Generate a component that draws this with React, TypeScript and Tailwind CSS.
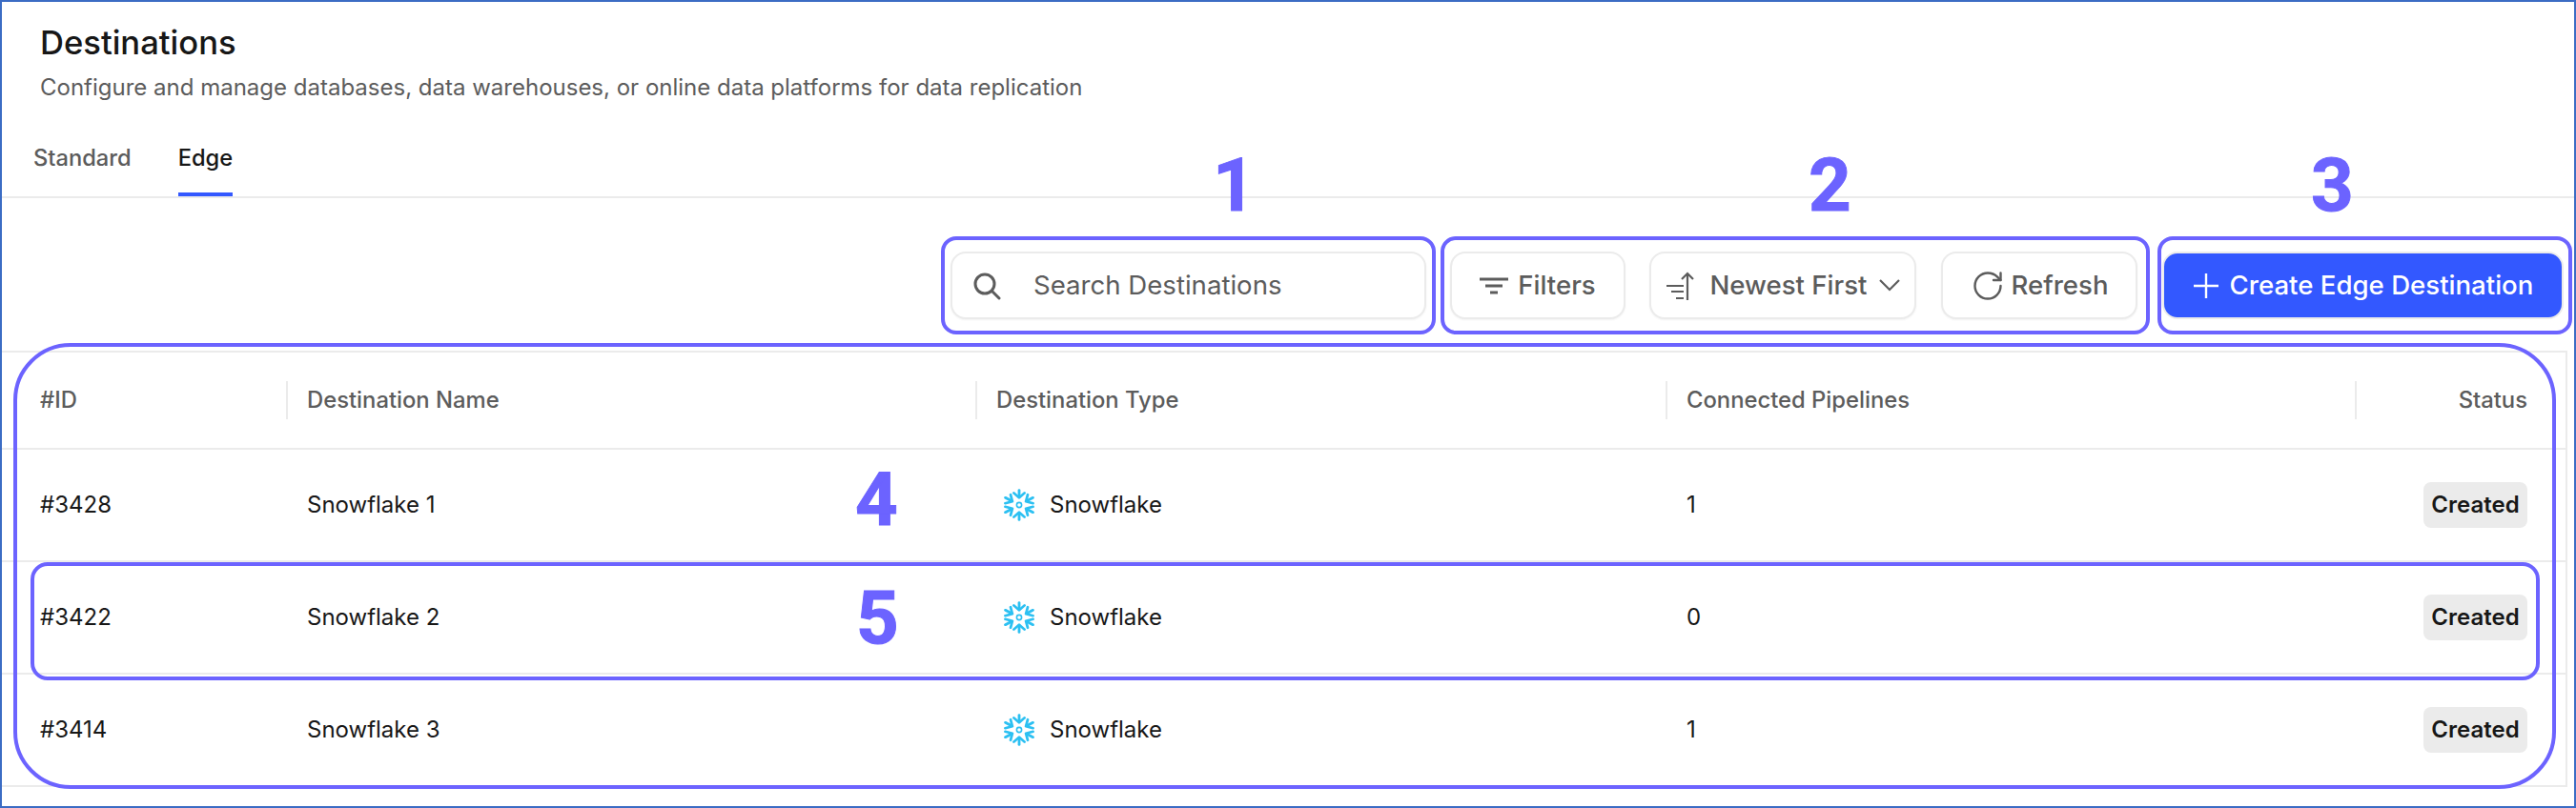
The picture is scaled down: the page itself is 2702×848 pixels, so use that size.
import { RotateCw } from "lucide-react";

function SnowflakeLogo() {
  const angles = [0, 60, 120, 180, 240, 300];
  return (
    <svg width="34" height="34" viewBox="-17 -17 34 34" className="shrink-0">
      <g transform="scale(1.08 1)">
        {angles.map((a) => (
          <g key={a} transform={`rotate(${a})`} stroke="#2cc0f2" strokeWidth="2.6" strokeLinecap="round" strokeLinejoin="round" fill="none">
            <path d="M0 -8.5V-15.5" />
            <path d="M-5.2 -12.6L0 -7.6L5.2 -12.6" />
          </g>
        ))}
      </g>
      <circle cx="0" cy="0" r="2.6" fill="none" stroke="#2cc0f2" strokeWidth="1.6" />
    </svg>
  );
}

function SearchIcon() {
  return (
    <svg width="30" height="30" viewBox="0 0 30 30" fill="none" stroke="#5c5c5c" strokeWidth="3" strokeLinecap="round" className="shrink-0">
      <circle cx="13" cy="13" r="10" />
      <path d="M21 21L28 28" />
    </svg>
  );
}

function PlusIcon() {
  return (
    <svg width="28" height="28" viewBox="0 0 28 28" fill="none" stroke="#ffffff" strokeWidth="2.4" className="shrink-0">
      <path d="M14 1V27M1 14H27" />
    </svg>
  );
}

function ChevronIcon() {
  return (
    <svg width="22" height="13" viewBox="0 0 22 13" fill="none" stroke="#5c5c5c" strokeWidth="2.2" className="shrink-0">
      <path d="M1 1L11 11L21 1" />
    </svg>
  );
}

function FilterIcon() {
  return (
    <svg width="30" height="22" viewBox="0 0 30 22" fill="none" stroke="#5c5c5c" strokeWidth="2.8" className="shrink-0">
      <path d="M0 4H30M6 11H24M11 18H19" />
    </svg>
  );
}

function SortIcon() {
  return (
    <svg width="29" height="30" viewBox="0 0 29 30" fill="none" stroke="#5c5c5c" strokeWidth="2.2" className="shrink-0">
      <path d="M22 30V2M16 8L22 2L28 8" />
      <path d="M0 15H18M5 21H18M10 28H18" />
    </svg>
  );
}

const rows = [
  { id: "#3428", name: "Snowflake 1", conn: "1" },
  { id: "#3422", name: "Snowflake 2", conn: "0" },
  { id: "#3414", name: "Snowflake 3", conn: "1" },
];

const columns = "grid grid-cols-[298px_723px_724px_723px_1fr]";
const button =
  "flex h-[71px] items-center justify-center rounded-[16px] border-2 border-[#ebebeb] bg-white text-[27.6px] font-medium text-[#5c5c5c] shadow-[0_1px_2px_rgba(0,0,0,0.05)]";
const digit =
  "pointer-events-none absolute font-['Roboto',sans-serif] text-[78px] font-bold leading-[90px] text-[#6c63ff] [-webkit-text-stroke:1px_#6c63ff]";

export default function App() {
  return (
    <div className="relative h-[848px] w-[2702px] overflow-hidden border-2 border-[#3b6cc4] bg-white font-['Inter',sans-serif]">
      <header className="pl-[40px] pt-[22px]">
        <h1 className="text-[34.6px] font-medium leading-[40px] text-[#171717]">Destinations</h1>
        <p className="mt-[12px] text-[24px] leading-[32px] text-[#5c5c5c]">
          Configure and manage databases, data warehouses, or online data platforms for data replication
        </p>
      </header>

      <nav className="mt-[42px] flex gap-[49px] border-b-2 border-[#ebebeb] pl-[33px] text-[23.7px] font-medium leading-[32px]">
        <span className="border-b-4 border-transparent pb-[20px] text-[#5c5c5c]">Standard</span>
        <span className="border-b-4 border-[#3358ff] pb-[20px] text-[#171717]">Edge</span>
      </nav>

      <div className="mt-[56px] flex justify-end gap-[25px] pr-[11px]">
        <div className="flex h-[71px] w-[499px] items-center rounded-[16px] border-2 border-[#ebebeb] bg-white pl-[21px] text-[27.6px] text-[#5c5c5c] shadow-[0_1px_2px_rgba(0,0,0,0.05)]">
          <SearchIcon />
          <span className="ml-[34px]">Search Destinations</span>
        </div>
        <div className={`${button} w-[184px] gap-[10px]`}>
          <FilterIcon />
          Filters
        </div>
        <div className={`${button} w-[280px] gap-[12px]`}>
          <span className="mr-[5px] flex">
            <SortIcon />
          </span>
          Newest First
          <ChevronIcon />
        </div>
        <div className={`${button} ml-[1px] w-[206px] gap-[7px]`}>
          <RotateCw size={36} strokeWidth={1.6} className="shrink-0" />
          Refresh
        </div>
        <div className="ml-[1px] flex h-[71px] w-[421px] items-center justify-center gap-[11px] rounded-[16px] border-2 border-[#ebebeb] bg-[#3358ff] text-[27.6px] font-medium text-white">
          <PlusIcon />
          Create Edge Destination
        </div>
      </div>

      <section className="mr-[7px] mt-[33px] border-r-2 border-t-2 border-[#ebebeb]">
        <div className={`${columns} h-[102px] items-center border-b-2 border-[#ebebeb] text-[23.8px] font-medium text-[#5c5c5c]`}>
          <div className="pl-[40px]">#ID</div>
          <div className="flex h-[40px] items-center border-l-2 border-[#ebebeb] pl-[20px]">Destination Name</div>
          <div className="flex h-[40px] items-center border-l-2 border-[#ebebeb] pl-[20px]">Destination Type</div>
          <div className="flex h-[40px] items-center border-l-2 border-[#ebebeb] pl-[20px]">Connected Pipelines</div>
          <div className="flex h-[40px] items-center justify-end border-l-2 border-[#ebebeb] pr-[40px]">Status</div>
        </div>
        {rows.map((r) => (
          <div key={r.id} className={`${columns} h-[118px] items-center border-b-2 border-[#ebebeb] text-[24px] text-[#171717]`}>
            <div className="pl-[40px]">{r.id}</div>
            <div className="pl-[22px]">{r.name}</div>
            <div className="flex items-center gap-[15px] pl-[29px]">
              <SnowflakeLogo />
              Snowflake
            </div>
            <div className="pl-[22px]">{r.conn}</div>
            <div className="flex justify-end pr-[40px]">
              <span className="flex h-[48px] w-[109px] items-center justify-center rounded-[8px] bg-[#ebebeb] font-semibold">
                Created
              </span>
            </div>
          </div>
        ))}
      </section>

      {/* annotation overlays */}
      <div className="pointer-events-none absolute left-[985px] top-[246px] h-[103px] w-[519px] rounded-[16px] border-4 border-[#6c63ff]" />
      <div className="pointer-events-none absolute left-[1509px] top-[246px] h-[103px] w-[744px] rounded-[16px] border-4 border-[#6c63ff]" />
      <div className="pointer-events-none absolute left-[2261px] top-[246px] h-[103px] w-[435px] rounded-[16px] border-4 border-[#6c63ff]" />
      <div className="pointer-events-none absolute left-[12px] top-[358px] h-[468px] w-[2667px] rounded-[60px] border-4 border-[#6c63ff]" />
      <div className="pointer-events-none absolute left-[30px] top-[588px] h-[124px] w-[2632px] rounded-[18px] border-4 border-[#6c63ff]" />

      <span className={`${digit} left-[1270px] top-[148px]`}>1</span>
      <span className={`${digit} left-[1895px] top-[148px]`}>2</span>
      <span className={`${digit} left-[2422px] top-[148px]`}>3</span>
      <span className={`${digit} left-[895px] top-[478px]`}>4</span>
      <span className={`${digit} left-[896px] top-[602px]`}>5</span>
    </div>
  );
}
